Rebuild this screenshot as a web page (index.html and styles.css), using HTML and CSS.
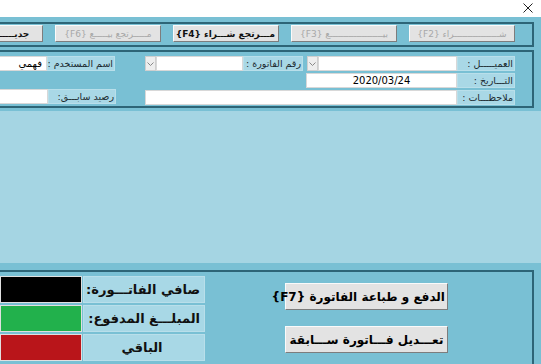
FILE: index.html
```html
<!DOCTYPE html>
<html lang="ar" dir="rtl">
<head>
  <meta charset="UTF-8">
  <meta name="viewport" content="width=device-width, initial-scale=1.0">
  <title>فاتورة</title>
  <link rel="stylesheet" href="styles.css">
</head>
<body>
  <div class="title-bar">
    <svg class="close-icon" width="10" height="10" viewBox="0 0 10 10">
      <path d="M0.5 0.5 L9.5 9.5 M9.5 0.5 L0.5 9.5" stroke="#222" stroke-width="1" fill="none"/>
    </svg>
  </div>

  <div class="window">
    <!-- شريط الأزرار -->
    <div class="group toolbar">
      <button class="tool-btn off">شـــــــــــــــــراء {F2}</button>
      <button class="tool-btn off">بيــــــــــــــــــــع {F3}</button>
      <button class="tool-btn">مـــرتجع شـــراء {F4}</button>
      <button class="tool-btn off">مـــــرتجع بيـــــع {F6}</button>
      <button class="tool-btn">جديـــــــــــــــــــد</button>
    </div>

    <!-- بيانات الفاتورة -->
    <div class="group form">
      <div class="form-row">
        <div class="lbl">العميـــــل :</div>
        <div class="field w-customer"></div>
        <div class="drop"><svg width="7" height="4" viewBox="0 0 7 4"><path d="M0.5 0.5 L3.5 3.5 L6.5 0.5" stroke="#888" fill="none"/></svg></div>
        <div class="lbl w-invoice-lbl">رقم الفاتورة :</div>
        <div class="field w-invoice"></div>
        <div class="drop"><svg width="7" height="4" viewBox="0 0 7 4"><path d="M0.5 0.5 L3.5 3.5 L6.5 0.5" stroke="#888" fill="none"/></svg></div>
        <div class="lbl w-user-lbl">اسم المستخدم :</div>
        <div class="field w-user">فهمي</div>
      </div>
      <div class="form-row">
        <div class="lbl">التـــاريخ :</div>
        <div class="field w-date" dir="ltr">2020/03/24</div>
      </div>
      <div class="form-row">
        <div class="lbl">ملاحظـــات :</div>
        <div class="field w-notes"></div>
        <div class="lbl w-balance-lbl">رصيد سابـــق:</div>
        <div class="field w-balance"></div>
      </div>
    </div>

    <div class="items-area"></div>

    <!-- الإجماليات -->
    <div class="group totals">
      <div class="actions">
        <button class="big-btn">الدفع و طباعة الفاتورة {F7}</button>
        <button class="big-btn">تعـــديل فـــاتورة ســـابقة</button>
      </div>
      <div class="sums">
        <div class="sum-row">
          <div class="sum-lbl">صافي الفاتـــورة:</div>
          <div class="sum-val black"></div>
        </div>
        <div class="sum-row">
          <div class="sum-lbl">المبلـــغ المدفوع:</div>
          <div class="sum-val green"></div>
        </div>
        <div class="sum-row">
          <div class="sum-lbl center">الباقي</div>
          <div class="sum-val red"></div>
        </div>
      </div>
    </div>
  </div>
</body>
</html>
```

FILE: styles.css
```css
/* الألوان العامة */
body {
  margin: 0;
  width: 541px;
  height: 364px;
  overflow: hidden;
  font-family: "DejaVu Sans", sans-serif;
  background-color: #79c0d4;
}

.title-bar {
  height: 17px;
  background-color: #fff;
  position: relative;
}

.close-icon {
  position: absolute;
  left: 523px;
  top: 3px;
}

.window {
  padding-top: 5px;
}

.group {
  border: 2px solid #2d6577;
  border-left: none;
  margin-right: 7px;
  overflow: hidden;
}

/* شريط الأزرار */
.toolbar {
  display: flex;
  gap: 12px;
  padding: 1px 17px 3px 0;
}

.tool-btn {
  flex: none;
  width: 106px;
  height: 17px;
  padding: 0 3px;
  font-family: inherit;
  font-size: 9px;
  font-weight: bold;
  color: #111;
  background-color: #e3e3e3;
  border: 1px solid;
  border-color: #fafafa #7d7d7d #7d7d7d #fafafa;
  white-space: nowrap;
  overflow: hidden;
}

.tool-btn.off {
  color: #a8a8a8;
  font-weight: normal;
}

/* بيانات الفاتورة */
.form {
  margin-top: 3px;
  padding: 4px 17px 1px 0;
  display: flex;
  flex-direction: column;
  gap: 2px;
}

.form-row {
  display: flex;
  height: 15px;
}

.lbl {
  flex: none;
  width: 54px;
  height: 13px;
  padding: 0 1px;
  border: 1px solid #b9dfea;
  background-color: #a9d8e6;
  font-size: 9.5px;
  line-height: 13px;
  color: #1b2a30;
  white-space: nowrap;
  overflow: hidden;
}

.field {
  flex: none;
  box-sizing: border-box;
  height: 15px;
  border: 1px solid #d8d8d8;
  background-color: #fff;
  font-size: 10px;
  line-height: 13px;
  padding: 0 4px;
  white-space: nowrap;
}

.drop {
  flex: none;
  width: 11px;
  height: 15px;
  box-sizing: border-box;
  border: 1px solid #cfcfcf;
  background-color: #eee;
  display: flex;
  align-items: center;
  justify-content: center;
}

.w-customer { width: 139px; }
.w-invoice-lbl { margin-right: 4px; width: 56px; }
.w-invoice { width: 87px; }
.w-user-lbl { margin-right: 30px; width: 64px; }
.w-user { width: 52px; }
.w-date { width: 151px; text-align: center; }
.w-notes { width: 312px; }
.w-balance-lbl { margin-right: 29px; width: 64px; margin-top: -1px; }
.w-balance { width: 50px; margin-top: -1px; }

/* منطقة الأصناف */
.items-area {
  height: 152px;
  margin-top: 3px;
  background-color: #a5d5e3;
}

/* الإجماليات */
.totals {
  margin-top: 7px;
  height: 100px;
  display: flex;
  border-bottom: none;
}

.actions {
  display: flex;
  flex-direction: column;
  gap: 16px;
  margin-right: 84px;
  padding-top: 11px;
}

.big-btn {
  width: 163px;
  height: 27px;
  padding: 0 2px;
  font-family: inherit;
  font-size: 12px;
  font-weight: bold;
  color: #000;
  background-color: #e3e3e3;
  border: 1px solid;
  border-color: #fafafa #7d7d7d #7d7d7d #fafafa;
  white-space: nowrap;
}

.sums {
  margin-right: 80px;
  padding-top: 4px;
  display: flex;
  flex-direction: column;
  gap: 2px;
}

.sum-row {
  display: flex;
  gap: 1px;
  height: 27px;
}

.sum-lbl {
  width: 116px;
  padding: 0 4px 0 0;
  border: 1px solid #b9dfea;
  background-color: #a8d8e6;
  font-size: 13px;
  font-weight: bold;
  line-height: 25px;
  color: #111;
  white-space: nowrap;
  overflow: hidden;
}

.sum-lbl.center {
  text-align: center;
}

.sum-val {
  width: 82px;
  box-sizing: border-box;
  border: 1px solid #e0e0e0;
}

.black { background-color: #000; }
.green { background-color: #22b14c; }
.red { background-color: #b9151a; }
```
